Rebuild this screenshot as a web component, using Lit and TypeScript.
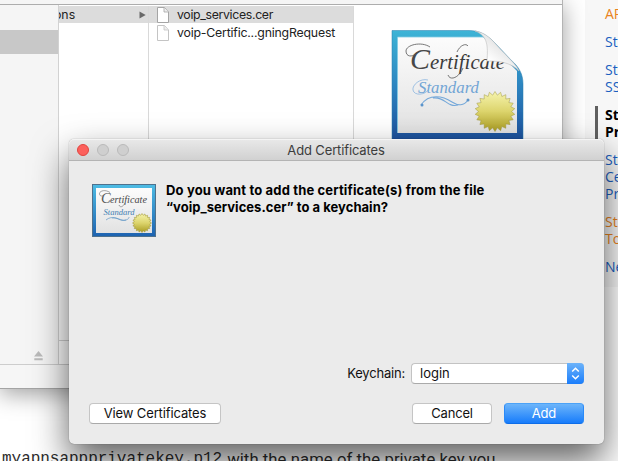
import { LitElement, html, css, svg } from "lit";
import { customElement, property } from "lit/decorators.js";

const starPoints = (cx: number, cy: number, outer: number, inner: number, n: number) =>
  Array.from({ length: n * 2 }, (_, i) => {
    const r = i % 2 ? inner : outer;
    const a = (Math.PI * i) / n - Math.PI / 2;
    return `${(cx + r * Math.cos(a)).toFixed(2)},${(cy + r * Math.sin(a)).toFixed(2)}`;
  }).join(" ");

const gradients = svg`
  <linearGradient id="frame" x1="0" y1="0" x2="0" y2="1">
    <stop offset="0" stop-color="#3db4d6"/><stop offset=".5" stop-color="#2c84c0"/><stop offset="1" stop-color="#1c4f9c"/>
  </linearGradient>
  <linearGradient id="bright" x1="0" y1="0" x2="0" y2="1">
    <stop offset="0" stop-color="#4dbce4"/><stop offset="1" stop-color="#1d62b0"/>
  </linearGradient>
  <linearGradient id="paper" x1="0" y1="0" x2="0" y2="1">
    <stop offset="0" stop-color="#fcfcfc"/><stop offset="1" stop-color="#e2e2e2"/>
  </linearGradient>
  <linearGradient id="seal" x1="0" y1="0" x2="0" y2="1">
    <stop offset="0" stop-color="#f6f4ae"/><stop offset=".5" stop-color="#dcd46c"/><stop offset="1" stop-color="#aa9c22"/>
  </linearGradient>
  <linearGradient id="curl" x1="0" y1="1" x2=".7" y2=".25">
    <stop offset="0" stop-color="#d8d8d8"/><stop offset=".4" stop-color="#fff"/><stop offset="1" stop-color="#dcdcdc"/>
  </linearGradient>`;

@customElement("certificate-icon")
class CertificateIcon extends LitElement {
  @property() variant = "small";

  static styles = css`
    :host { display: block; }
    svg { display: block; overflow: visible; }
    text { font-family: "Liberation Serif", serif; font-style: italic; }
  `;

  render() {
    return this.variant === "large"
      ? html`<svg width="133" height="112" viewBox="0 0 133 112">
          <defs>${gradients}</defs>
          <path d="M0 .5H77C87 .5 93 4 101 11L119 30C127 37 131 44 131 54V112H0Z" fill="url(#frame)" stroke="#277eae" stroke-opacity=".5"/>
          <path d="M5.500 7H91L125 41V103H5.500Z" fill="url(#paper)"/>
          <path d="M5.500 103V7H92" fill="none" stroke="#80cbe3" stroke-width=".8"/>
          <text x="18" y="38.500" font-size="30" fill="#484848">C</text>
          <text x="38" y="38.500" font-size="21" textLength="75" lengthAdjust="spacingAndGlyphs" fill="#3c3c3c">ertificate</text>
          <path d="M38 17C29 11 14 15 14 21C14 27 20 27 24 24M71 38C67 48 58 51 56 45M65 22C68 15 74 13 76 16" fill="none" stroke="#555" stroke-width=".8"/>
          <text x="26" y="63" font-size="17" textLength="61" lengthAdjust="spacingAndGlyphs" fill="#72a5d5">Standard</text>
          <path d="M36 50C28 48 20 55 21 60C22 66 33 65 36 60" fill="none" stroke="#8ab5df" stroke-width=".8"/>
          <path d="M29 75C37 63 51 66 60 72C66 76 72 76 76 70M41 68C53 66 55 78 66 75" fill="none" stroke="#75a8d9" stroke-width="1.100"/>
          <circle cx="30" cy="75" r="1.500" fill="#5b94cb"/><circle cx="76" cy="70" r="1.500" fill="#5b94cb"/>
          <polygon points=${starPoints(103, 81.5, 20, 16.5, 22)} fill="url(#seal)" stroke="#9f963d" stroke-opacity=".7" stroke-width=".7"/>
          <path d="M83 1C96 6 96 16 95 31C107 31 118 32 127 41C124 34 118 30 101 11C95 5 90 2 83 1Z" fill="url(#curl)" stroke="#bdbdbd" stroke-width=".6"/>
        </svg>`
      : html`<svg width="64" height="53" viewBox="0 0 64 53">
          <defs>${gradients}</defs>
          <rect x=".5" y=".5" width="63" height="52" fill="url(#bright)" stroke="#4e718d"/>
          <rect x="4" y="4" width="56" height="45" fill="url(#paper)"/>
          <text x="9" y="19" font-size="14.500" fill="#555">C</text>
          <text x="18" y="19" font-size="10.500" textLength="37" lengthAdjust="spacingAndGlyphs" fill="#484848">ertificate</text>
          <path d="M18 8.500C13 5 7 7 7.500 10C8 13 11 12 12 11M33 19C31 23 28 24 27 21" fill="none" stroke="#666" stroke-width=".6"/>
          <text x="11.500" y="30.500" font-size="8.500" textLength="31" lengthAdjust="spacingAndGlyphs" fill="#447fb3">Standard</text>
          <path d="M14 36C20 31 26 35 30 36C34 37 37 35 37 33M20 34C26 33 28 38 34 36" fill="none" stroke="#6097c6" stroke-width=".7"/>
          <polygon points=${starPoints(50, 39, 9.5, 7.8, 20)} fill="url(#seal)" stroke="#a49b38" stroke-width=".6"/>
        </svg>`;
  }
}

@customElement("finder-window")
class FinderWindow extends LitElement {
  static styles = css`
    :host { display: flex; flex-direction: column; box-sizing: border-box; overflow: hidden; background: #fff;
      border-right: 1px solid #b4b4b4; border-bottom: 1px solid #a4a4a4; font: 12.300px/18px Inter, sans-serif; color: #222; }
    .toolbar { height: 4px; background: #f5f5f5; border-bottom: 1px solid #adadad; }
    .body { flex: 1; display: flex; min-height: 0; }
    .sidebar { width: 58px; background: #f5f5f5; border-right: 1px solid #d2d2d2; display: flex; flex-direction: column;
      justify-content: space-between; padding-top: 25px; box-sizing: content-box; }
    .selected { height: 24px; background: #c8c8c8; }
    .eject { align-self: flex-end; margin: 0 15px 3px 0; }
    .main { flex: 1; display: flex; flex-direction: column; }
    .columns { flex: 1; display: flex; padding-top: 1px; }
    .col { border-right: 1px solid #d9d9d9; white-space: nowrap; overflow: hidden; }
    .c1 { width: 89px; }
    .c2 { width: 204px; }
    .row { height: 17px; margin-bottom: 1px; display: flex; align-items: center; }
    .active { background: #dcdcdc; }
    .c1 .row { justify-content: space-between; padding-right: 2px; }
    .folder { margin-left: -5px; }
    .c2 .row { padding-left: 8px; gap: 8px; }
    .f1 { letter-spacing: -.33px; }
    .f2 { letter-spacing: -.19px; }
    .preview { flex: 1; padding: 24px 0 0 38px; }
    .scroll { height: 23px; border-top: 1px solid #d2d2d2; }
    .status { height: 23px; background: #f6f6f6; border-top: 1px solid #cdcdcd; }
    svg { display: block; flex: none; }
  `;

  private file(tone: string) {
    return html`<svg width="12" height="16" viewBox="0 0 12 16"><path d="M.5 .5H7.500L11.500 5V15.500H.5Z" fill="#fff" stroke=${tone}/><path d="M7 .5V5H11.500" fill="#eee" stroke=${tone} stroke-width=".8"/></svg>`;
  }

  render() {
    return html`
      <div class="toolbar"></div>
      <div class="body">
        <div class="sidebar">
          <div class="selected"></div>
          <svg class="eject" width="9" height="10" viewBox="0 0 9 10"><path d="M4.500 0L9 5.500H0ZM.3 7.300H8.700V9.300H.3Z" fill="#bbb"/></svg>
        </div>
        <div class="main">
          <div class="columns">
            <div class="col c1">
              <div class="row active"><span class="folder">ons</span>
                <svg width="7" height="8" viewBox="0 0 7 8"><path d="M.5 .5L6.700 4L.5 7.500Z" fill="#686868"/></svg></div>
            </div>
            <div class="col c2">
              <div class="row active">${this.file("#a5a5a5")}<span class="f1">voip_services.cer</span></div>
              <div class="row">${this.file("#c4c4c4")}<span class="f2">voip-Certific...gningRequest</span></div>
            </div>
            <div class="preview"><certificate-icon variant="large"></certificate-icon></div>
          </div>
          <div class="scroll"></div>
        </div>
      </div>
      <div class="status"></div>`;
  }
}

@customElement("add-dialog")
class AddDialog extends LitElement {
  static styles = css`
    :host { display: flex; flex-direction: column; box-sizing: border-box; background: #ebebeb; border-radius: 5px;
      font: 13px/17px Inter, sans-serif; color: #111; }
    .title { height: 21px; border-bottom: 1px solid #b4b4b4; border-radius: 5px 5px 0 0; display: grid;
      grid-template-columns: 80px 1fr 80px; align-items: center;
      background: linear-gradient(#e9e9e9, #d1d1d1); box-shadow: inset 0 1px #f4f4f4; color: #3c3c3c; text-align: center; }
    .lights { display: flex; gap: 8px; padding-left: 8px; }
    .light { width: 12px; height: 12px; box-sizing: border-box; border: 1px solid #bababa; border-radius: 50%; background: #cfcfcf; }
    .close { background: #fc605c; border-color: #e0443f; }
    .caption { letter-spacing: -.14px; padding: 1px 1px 0 0; }
    .question { display: flex; gap: 10px; padding: 23px 0 0 23px; flex: 1; }
    .message { margin-top: -2px; font-weight: 700; color: #000; white-space: nowrap; }
    .first { letter-spacing: .15px; }
    .second { letter-spacing: .03px; }
    .keychain { display: flex; justify-content: flex-end; align-items: center; gap: 6px; padding-right: 20px; }
    .label { letter-spacing: -.2px; }
    .popup { width: 173px; height: 21px; box-sizing: border-box; border: 1px solid #c3c3c3; border-right: 0; border-bottom-color: #aaa;
      border-radius: 4px; background: #fff; display: flex; justify-content: space-between; align-items: center; padding-left: 8px; }
    .stepper { width: 17px; height: 21px; flex: none; border-radius: 0 4px 4px 0; background: linear-gradient(#6cb3fa, #1a7dfb); display: grid; place-items: center; }
    .actions { display: flex; gap: 12px; padding: 19px 20px 20px; }
    .button { height: 21px; width: 80px; box-sizing: border-box; border: 1px solid #c5c5c5; border-bottom-color: #a9a9a9; border-radius: 4px;
      background: #fff; text-align: center; line-height: 19px; letter-spacing: -.2px; }
    .view { width: 132px; margin-right: auto; letter-spacing: -.13px; }
    .add { color: #fff; border-color: #4ba2f7 #2a8af8 #0d6de8; background: linear-gradient(#6db5fa, #177cfb); }
  `;

  render() {
    return html`
      <div class="title">
        <div class="lights"><i class="light close"></i><i class="light"></i><i class="light"></i></div>
        <span class="caption">Add Certificates</span>
      </div>
      <div class="question">
        <certificate-icon></certificate-icon>
        <div class="message"><div class="first">Do you want to add the certificate(s) from the file</div><div class="second">“voip_services.cer” to a keychain?</div></div>
      </div>
      <div class="keychain"><span class="label">Keychain:</span>
        <div class="popup"><span>login</span>
          <span class="stepper"><svg width="9" height="13" viewBox="0 0 9 13"><path d="M1.200 4.500L4.500 1.300L7.800 4.500M1.200 8.500L4.500 11.700L7.800 8.500" fill="none" stroke="#fff" stroke-width="1.500"/></svg></span>
        </div>
      </div>
      <div class="actions">
        <div class="button view">View Certificates</div>
        <div class="button">Cancel</div>
        <div class="button add">Add</div>
      </div>`;
  }
}

const sections = [
  { tone: "orange", lines: ["AP"] },
  { tone: "", lines: ["St"] },
  { tone: "", lines: ["St", "SS"] },
  { tone: "current", lines: ["St", "Pr"] },
  { tone: "", lines: ["St", "Ce", "Pr"] },
  { tone: "orange", lines: ["St", "To"] },
  { tone: "", lines: ["Ne"] },
];

@customElement("app-root")
class AppRoot extends LitElement {
  static styles = css`
    :host { display: block; position: relative; width: 618px; height: 461px; overflow: hidden; background: #fff; }
    .page { height: 461px; display: flex; flex-direction: column; justify-content: space-between; }
    .nav { align-self: flex-end; width: 33px; height: 287px; box-sizing: border-box; padding-top: 4.500px; background: #f7f7f7;
      font: 500 14px/17px "Open Sans", sans-serif; color: #1b5fc0; overflow: hidden; }
    .section { margin: 0 0 11px 10px; padding-left: 7px; border-left: 3px solid transparent; white-space: nowrap; }
    .orange { color: #e98320; }
    .current { color: #000; font-weight: 700; border-left-color: #606060; }
    .prose { height: 12px; padding-left: 2px; white-space: nowrap; font: 16.700px/21px Roboto, sans-serif; color: #2c2c2c; display: flex; gap: 5px; }
    .code { font-family: "Liberation Mono", monospace; font-size: 16px; letter-spacing: -.03px; }
    .text { letter-spacing: .06px; }
    finder-window { position: absolute; left: 0; top: 0; width: 563px; height: 389px;
      box-shadow: 0 5px 22px rgba(0,0,0,.38); }
    add-dialog { position: absolute; left: 69px; top: 139px; width: 535px; height: 305px;
      box-shadow: 0 0 1px rgba(0,0,0,.55), 0 17px 36px rgba(0,0,0,.62); }
  `;

  render() {
    return html`
      <div class="page">
        <div class="nav">${sections.map((s) => html`<div class="section ${s.tone}">${s.lines.map((l) => html`<div>${l}</div>`)}</div>`)}</div>
        <div class="prose"><span class="code">myapnsappprivatekey.p12</span><span class="text">with the name of the private key you</span></div>
      </div>
      <finder-window></finder-window>
      <add-dialog></add-dialog>`;
  }
}
